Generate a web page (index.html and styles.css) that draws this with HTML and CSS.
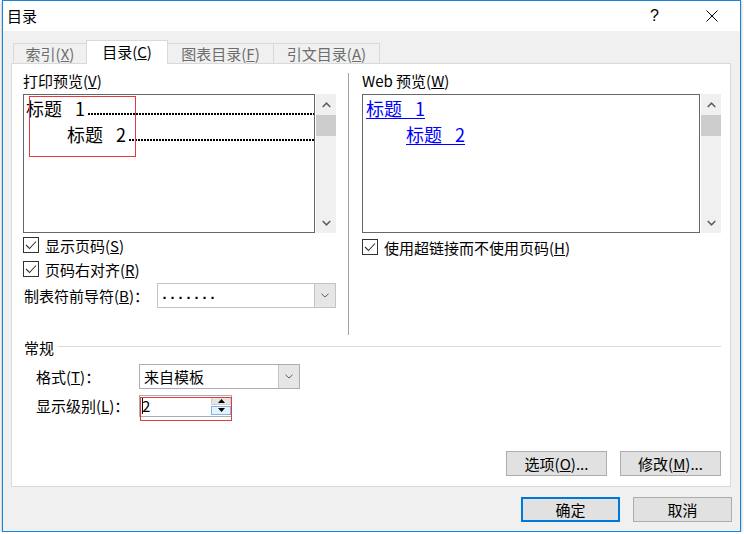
FILE: index.html
```html
<!DOCTYPE html>
<html lang="zh-CN">
<head>
    <meta charset="UTF-8">
    <title>目录</title>
    <link rel="stylesheet" href="styles.css">
</head>
<body>
    <div class="window">
        <div class="titlebar">
            <span class="title">目录</span>
            <span class="title-btn help">?</span>
            <span class="title-btn">
                <svg width="12" height="12" viewBox="0 0 12 12"><path d="M0.5 0.5 L11.5 11.5 M11.5 0.5 L0.5 11.5" stroke="#000" stroke-width="1" fill="none"/></svg>
            </span>
        </div>

        <div class="client">
            <div class="tabs">
                <div class="tab">索引(<u>X</u>)</div>
                <div class="tab active">目录(<u>C</u>)</div>
                <div class="tab">图表目录(<u>F</u>)</div>
                <div class="tab">引文目录(<u>A</u>)</div>
            </div>

            <div class="panel">
                <div class="previews">
                    <!-- 打印预览 -->
                    <div class="col">
                        <div class="group-label">打印预览(<u>V</u>)</div>
                        <div class="preview-row">
                            <div class="preview-box">
                                <div class="toc-line"><span>标题 1</span><span class="leader"></span></div>
                                <div class="toc-line level2"><span>标题 2</span><span class="leader"></span></div>
                                <div class="mark mark-preview"></div>
                            </div>
                            <div class="scrollbar">
                                <div class="sb-arrow"><svg width="9" height="6" viewBox="0 0 9 6"><path d="M0.7 5 L4.5 1.2 L8.3 5" stroke="#606060" stroke-width="1.6" fill="none"/></svg></div>
                                <div class="sb-thumb"></div>
                                <div class="sb-track"></div>
                                <div class="sb-arrow"><svg width="9" height="6" viewBox="0 0 9 6"><path d="M0.7 1 L4.5 4.8 L8.3 1" stroke="#606060" stroke-width="1.6" fill="none"/></svg></div>
                            </div>
                        </div>
                        <div class="check">
                            <span class="box"><svg width="12" height="10" viewBox="0 0 12 10"><path d="M1 5 L4.5 8.5 L11 1.5" stroke="#333" stroke-width="1.1" fill="none"/></svg></span>
                            <span>显示页码(<u>S</u>)</span>
                        </div>
                        <div class="check">
                            <span class="box"><svg width="12" height="10" viewBox="0 0 12 10"><path d="M1 5 L4.5 8.5 L11 1.5" stroke="#333" stroke-width="1.1" fill="none"/></svg></span>
                            <span>页码右对齐(<u>R</u>)</span>
                        </div>
                        <div class="field-row">
                            <span class="field-label">制表符前导符(<u>B</u>)：</span>
                            <div class="select select-leader">
                                <span class="select-value dots">.......</span>
                                <span class="select-btn"><svg width="8" height="5" viewBox="0 0 8 5"><path d="M0.5 0.8 L4 4 L7.5 0.8" stroke="#606060" stroke-width="1" fill="none"/></svg></span>
                            </div>
                        </div>
                    </div>

                    <!-- Web 预览 -->
                    <div class="col col-web">
                        <div class="group-label">Web 预览(<u>W</u>)</div>
                        <div class="preview-row">
                            <div class="preview-box">
                                <div class="web-line"><a href="#">标题 1</a></div>
                                <div class="web-line level2"><a href="#">标题 2</a></div>
                            </div>
                            <div class="scrollbar">
                                <div class="sb-arrow"><svg width="9" height="6" viewBox="0 0 9 6"><path d="M0.7 5 L4.5 1.2 L8.3 5" stroke="#606060" stroke-width="1.6" fill="none"/></svg></div>
                                <div class="sb-thumb"></div>
                                <div class="sb-track"></div>
                                <div class="sb-arrow"><svg width="9" height="6" viewBox="0 0 9 6"><path d="M0.7 1 L4.5 4.8 L8.3 1" stroke="#606060" stroke-width="1.6" fill="none"/></svg></div>
                            </div>
                        </div>
                        <div class="check check-web">
                            <span class="box"><svg width="12" height="10" viewBox="0 0 12 10"><path d="M1 5 L4.5 8.5 L11 1.5" stroke="#333" stroke-width="1.1" fill="none"/></svg></span>
                            <span>使用超链接而不使用页码(<u>H</u>)</span>
                        </div>
                    </div>
                </div>

                <!-- 常规 -->
                <div class="general">
                    <div class="section-head"><span>常规</span></div>
                    <div class="form-row first">
                        <span class="form-label">格式(<u>T</u>)：</span>
                        <div class="select select-format">
                            <span class="select-value">来自模板</span>
                            <span class="select-btn"><svg width="8" height="5" viewBox="0 0 8 5"><path d="M0.5 0.8 L4 4 L7.5 0.8" stroke="#606060" stroke-width="1" fill="none"/></svg></span>
                        </div>
                    </div>
                    <div class="form-row">
                        <span class="form-label">显示级别(<u>L</u>)：</span>
                        <div class="spin">
                            <span class="spin-value"><span class="caret"></span>2</span>
                            <div class="spin-btns">
                                <span class="spin-up"><svg width="7" height="4" viewBox="0 0 7 4"><path d="M0 4 L3.5 0 L7 4 Z" fill="#000"/></svg></span>
                                <span class="spin-down"><svg width="7" height="4" viewBox="0 0 7 4"><path d="M0 0 L7 0 L3.5 4 Z" fill="#000"/></svg></span>
                            </div>
                            <div class="mark mark-spin"></div>
                        </div>
                    </div>
                </div>

                <div class="panel-buttons">
                    <button class="btn">选项(<u>O</u>)...</button>
                    <button class="btn">修改(<u>M</u>)...</button>
                </div>
            </div>

            <div class="dialog-buttons">
                <button class="btn btn-dialog default">确定</button>
                <button class="btn btn-dialog">取消</button>
            </div>
        </div>
    </div>
</body>
</html>
```

FILE: styles.css
```css
/* 全体 */
* {
    box-sizing: border-box;
}

body {
    margin: 0;
    background-color: #fff;
    color: #000;
    font-family: "Noto Sans CJK SC", "Noto Sans", sans-serif;
    font-size: 15px;
}

u {
    text-decoration: underline;
    text-underline-offset: 1px;
}

.window {
    width: 739px;
    height: 532px;
    margin-left: 2px;
    border: 1px solid #1883d7;
    background-color: #f0f0f0;
    display: flex;
    flex-direction: column;
    box-shadow: 0 1px 3px rgba(0, 0, 0, 0.35);
}

/* タイトルバー */
.titlebar {
    height: 30px;
    background-color: #fff;
    display: flex;
    align-items: center;
}

.title {
    flex: 1;
    padding-left: 4px;
    line-height: 30px;
}

.title-btn {
    width: 56px;
    height: 30px;
    display: flex;
    align-items: center;
    justify-content: center;
}

.help {
    font-family: "Liberation Sans", sans-serif;
    font-size: 16px;
    padding-right: 3px;
}

.client {
    flex: 1;
    padding: 9px 9px 0 8px;
}

/* タブ */
.tabs {
    display: flex;
    align-items: flex-end;
    height: 23px;
    padding-left: 2px;
    position: relative;
    z-index: 1;
}

.tab {
    height: 20px;
    border: 1px solid #d9d9d9;
    border-bottom: none;
    background-color: #f0f0f0;
    color: #6d6d6d;
    line-height: 19px;
    text-align: center;
}

.tab + .tab {
    border-left: none;
}

.tab:nth-child(1) { width: 74px; }
.tab:nth-child(2) { width: 82px; }
.tab:nth-child(3) { width: 106px; }
.tab:nth-child(4) { width: 106px; }

.tab.active {
    height: 24px;
    margin-bottom: -1px;
    margin-left: -1px;
    border-left: 1px solid #d9d9d9;
    background-color: #fff;
    color: #000;
    line-height: 22px;
}

.panel {
    height: 424px;
    background-color: #fff;
    border: 1px solid #d9d9d9;
    padding: 9px 9px 10px 11px;
    display: flex;
    flex-direction: column;
}

/* プレビュー */
.previews {
    display: grid;
    grid-template-columns: 313px 1fr;
    height: 262px;
}

.col-web {
    margin-left: 12px;
    border-left: 1px solid #a0a0a0;
    padding-left: 13px;
}

.group-label {
    height: 16px;
    line-height: 16px;
    margin-bottom: 5px;
}

.preview-row {
    display: flex;
    gap: 1px;
    height: 139px;
}

.preview-box {
    flex: 1;
    position: relative;
    border: 1px solid #666;
    background-color: #fff;
    padding-left: 2px;
    font-size: 18px;
    word-spacing: 9px;
    overflow: hidden;
}

.toc-line {
    display: flex;
    align-items: flex-end;
    height: 26px;
    line-height: 26px;
    white-space: nowrap;
}

.level2 {
    padding-left: 41px;
}

.leader {
    flex: 1;
    height: 2px;
    margin: 0 0 6px 3px;
    background-image: linear-gradient(to right, #000 0, #000 2px, transparent 2px);
    background-size: 3px 2px;
}

.web-line {
    height: 26px;
    line-height: 26px;
    padding-left: 1px;
    white-space: nowrap;
}

.web-line.level2 {
    padding-left: 41px;
}

.web-line a {
    color: #0000ff;
    text-decoration: underline;
    text-underline-offset: 2px;
}

.scrollbar {
    width: 20px;
    background-color: #f0f0f0;
    display: flex;
    flex-direction: column;
}

.sb-arrow {
    height: 21px;
    display: flex;
    align-items: center;
    justify-content: center;
}

.sb-thumb {
    height: 21px;
    background-color: #cdcdcd;
}

.sb-track {
    flex: 1;
}

/* 注記の赤枠 */
.mark {
    position: absolute;
    border: 1px solid #e8383d;
    pointer-events: none;
}

.mark-preview {
    left: 5px;
    top: 1px;
    width: 107px;
    height: 61px;
}

.mark-spin {
    left: 0;
    top: 1px;
    width: 92px;
    height: 24px;
}

/* チェックボックス */
.check {
    display: flex;
    align-items: center;
    gap: 6px;
    height: 24px;
    white-space: nowrap;
}

.check-web {
    margin-top: 2px;
}

.box {
    width: 16px;
    height: 16px;
    border: 1px solid #333;
    background-color: #fff;
    display: flex;
    align-items: center;
    justify-content: center;
}

.field-row {
    display: flex;
    align-items: center;
    margin-top: 2px;
}

.field-label {
    width: 134px;
    padding-left: 1px;
    white-space: nowrap;
}

/* コンボボックス */
.select {
    display: flex;
    height: 25px;
    border: 1px solid #c4c4c4;
    background-color: #fff;
}

.select-leader {
    width: 179px;
}

.select-format {
    width: 161px;
    border-color: #adadad;
}

.select-value {
    flex: 1;
    padding-left: 4px;
    line-height: 23px;
    white-space: nowrap;
}

.dots {
    font-family: "Liberation Mono", monospace;
    font-weight: bold;
    letter-spacing: -1px;
    padding-left: 2px;
}

.select-btn {
    width: 21px;
    background-color: #e6e6e6;
    border-left: 1px solid #c4c4c4;
    display: flex;
    align-items: center;
    justify-content: center;
}

/* 常規 */
.general {
    margin-top: 5px;
}

.section-head {
    display: flex;
    align-items: center;
    height: 16px;
    line-height: 16px;
    padding-left: 1px;
}

.section-head::after {
    content: "";
    flex: 1;
    height: 1px;
    margin: 0 0 4px 4px;
    background-color: #dcdcdc;
}

.form-row {
    display: flex;
    align-items: center;
    height: 25px;
    padding-left: 13px;
    margin-top: 4px;
}

.form-row.first {
    margin-top: 8px;
}

.form-label {
    width: 103px;
    white-space: nowrap;
}

.spin {
    position: relative;
    width: 93px;
    height: 22px;
    border: 1px solid #adadad;
    background-color: #fff;
    display: flex;
}

.spin-value {
    flex: 1;
    display: flex;
    align-items: center;
    padding-left: 2px;
    line-height: 20px;
}

.caret {
    width: 1px;
    height: 16px;
    background-color: #000;
    margin-right: -1px;
}

.spin-btns {
    width: 20px;
    margin: 1px 0 1px;
    display: flex;
    flex-direction: column;
    gap: 1px;
}

.spin-up,
.spin-down {
    flex: 1;
    display: flex;
    align-items: center;
    justify-content: center;
    background-color: #e5e5e5;
    border: 1px solid #cfcfcf;
}

.spin-down {
    background-color: #e5f1fb;
    border-color: #7eb4ea;
}

/* ボタン */
.panel-buttons {
    margin-top: auto;
    display: flex;
    justify-content: flex-end;
    gap: 13px;
}

.btn {
    width: 101px;
    height: 25px;
    padding: 0;
    background-color: #e1e1e1;
    border: 1px solid #adadad;
    font-family: inherit;
    font-size: 15px;
    line-height: 23px;
    color: #000;
    text-align: center;
}

.dialog-buttons {
    margin-top: 10px;
    margin-right: -1px;
    display: flex;
    justify-content: flex-end;
    gap: 13px;
}

.btn-dialog {
    width: 99px;
}

.btn-dialog.default {
    border: 2px solid #0078d7;
    line-height: 21px;
}
```
